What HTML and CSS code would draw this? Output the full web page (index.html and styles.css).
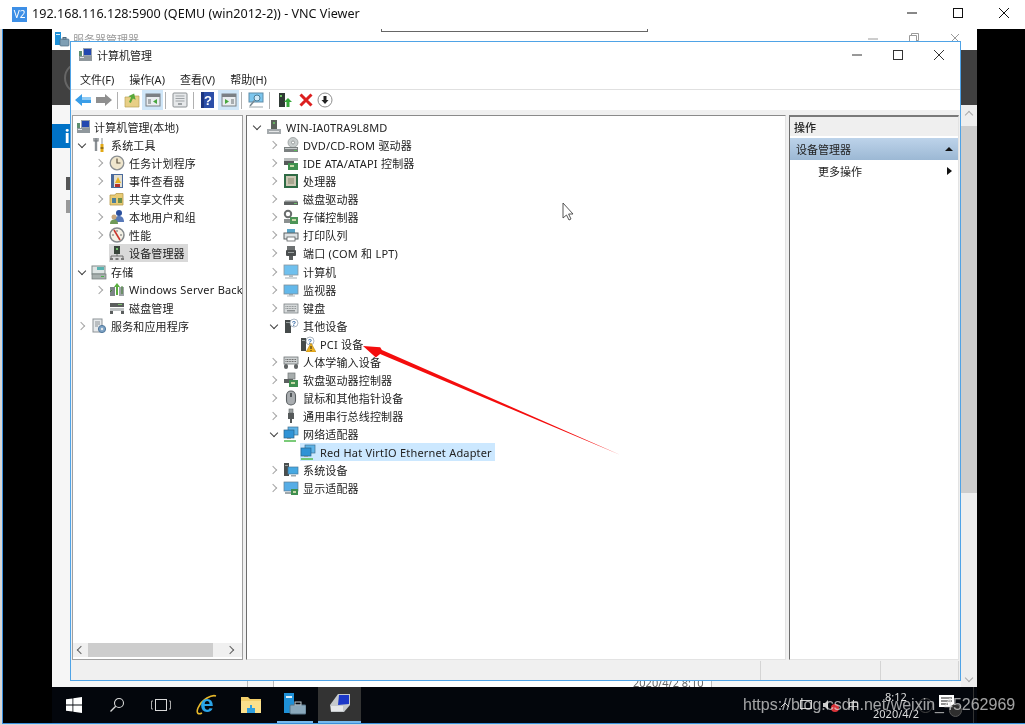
FILE: index.html
```html
<!DOCTYPE html>
<html>
<head>
    <title>192.168.116.128:5900 (QEMU (win2012-2)) - VNC Viewer</title>
    <link rel="stylesheet" href="styles.css">
</head>
<body>

<svg class="defs" width="0" height="0">
    <defs>
        <symbol id="i-cm" viewBox="0 0 16 16"><rect x="5" y="1" width="9" height="8" fill="#9aa3ad"/><rect x="6" y="2" width="7" height="6" fill="#2348b0"/><rect x="1" y="9" width="13" height="5" fill="#8f979c"/><rect x="2" y="10" width="4" height="1" fill="#e4e8ea"/><rect x="1" y="4" width="3" height="5" fill="#5f8f70"/></symbol>
        <symbol id="i-tools" viewBox="0 0 16 16"><path d="M5 1v13" stroke="#8a8f94" stroke-width="2.4"/><path d="M3 1v3h4V1" fill="none" stroke="#6f7478" stroke-width="1.2"/><path d="M11 1v6" stroke="#b5b9bc" stroke-width="1.6"/><path d="M11 7v8" stroke="#e2a915" stroke-width="3"/><path d="M9.5 11h3" stroke="#4a3a10"/></symbol>
        <symbol id="i-clock" viewBox="0 0 16 16"><circle cx="8" cy="8" r="6.8" fill="#efe6cd" stroke="#8b8f92" stroke-width="1.3"/><path d="M8 3.5V8h3.5" fill="none" stroke="#5c5240" stroke-width="1.2"/></symbol>
        <symbol id="i-event" viewBox="0 0 16 16"><rect x="2" y="1" width="12" height="14" fill="#4a6a9c"/><rect x="5" y="2" width="8" height="12" fill="#e3dfcf"/><path d="M9 4l3 6H6z" fill="#e8b320"/><rect x="6" y="11" width="5" height="3" fill="#b6332d"/></symbol>
        <symbol id="i-share" viewBox="0 0 16 16"><path d="M1 4h5l1-1.500h7V14H1z" fill="#e9cb74" stroke="#b59a4c" stroke-width=".8"/><rect x="3" y="7" width="4" height="5" fill="#4d7f9a"/><rect x="9" y="7" width="4" height="5" fill="#6d8f4c"/></symbol>
        <symbol id="i-users" viewBox="0 0 16 16"><circle cx="10" cy="4" r="3" fill="#2a4f9e"/><path d="M5 13c0-4 2-6 5-6s5 2 5 6z" fill="#5778b8"/><circle cx="5" cy="8" r="2.500" fill="#c9a77c"/><path d="M1 15c0-3 1.500-4.500 4-4.500s4 1.500 4 4.500z" fill="#6f9a58"/></symbol>
        <symbol id="i-perf" viewBox="0 0 16 16"><circle cx="8" cy="8" r="7" fill="#f4f1e6" stroke="#85898c" stroke-width="1.500"/><path d="M5 3l6 10" stroke="#c8362e" stroke-width="1.600"/><path d="M3 8h2M11 8h2M8 3v2" stroke="#6b6b6b"/></symbol>
        <symbol id="i-dev" viewBox="0 0 16 16"><rect x="5" y="1" width="6" height="8" fill="#3a463c"/><rect x="7" y="3" width="2" height="2" fill="#6fbf6a"/><path d="M8 9v2M2 13v-2h12v2" fill="none" stroke="#6d6d6d"/><rect x="1" y="13" width="3" height="2" fill="#787878"/><rect x="6.500" y="13" width="3" height="2" fill="#787878"/><rect x="12" y="13" width="3" height="2" fill="#787878"/></symbol>
        <symbol id="i-root" viewBox="0 0 16 16"><rect x="5" y="1" width="6" height="9" fill="#5b635b"/><rect x="7" y="3" width="2" height="2" fill="#66b060"/><rect x="1" y="10" width="14" height="5" fill="#a5aaad"/><rect x="3" y="12" width="10" height="1" fill="#e4e6e7"/></symbol>
        <symbol id="i-store" viewBox="0 0 16 16"><rect x="1" y="2" width="13" height="8" fill="#dfe5e4" stroke="#7f8a88"/><rect x="6" y="3" width="7" height="3" fill="#58b3b0"/><rect x="1" y="10" width="14" height="5" fill="#a8b0ae" stroke="#6f7876" stroke-width=".7"/><rect x="10" y="12" width="3" height="1" fill="#49b04a"/></symbol>
        <symbol id="i-wsb" viewBox="0 0 16 16"><rect x="1" y="5" width="5" height="9" fill="#7d8488"/><rect x="10" y="5" width="5" height="9" fill="#9da3a6"/><path d="M8 1l3 4H9v8H7V5H5z" fill="#58ad3d"/><path d="M3 8l-2 2M13 4v8" stroke="#3c7d2a"/></symbol>
        <symbol id="i-disk" viewBox="0 0 16 16"><rect x="1" y="3" width="14" height="4" fill="#5b5e5e"/><rect x="9" y="4" width="4" height="1" fill="#7dbf6e"/><rect x="1" y="8" width="14" height="3" fill="#bfc3c4"/><rect x="1" y="11" width="3" height="3" fill="#5b5e5e"/><rect x="12" y="11" width="3" height="3" fill="#5b5e5e"/></symbol>
        <symbol id="i-svc" viewBox="0 0 16 16"><rect x="2" y="1" width="9" height="13" fill="#e7eaec" stroke="#8c9296"/><path d="M4 4h5M4 6h5M4 8h3" stroke="#8c9296"/><circle cx="11" cy="11" r="3.600" fill="#7da2c4" stroke="#51789c"/><circle cx="11" cy="11" r="1.200" fill="#e7eaec"/></symbol>
        <symbol id="i-dvd" viewBox="0 0 16 16"><circle cx="10" cy="5.500" r="5" fill="#c8cdcd" stroke="#8d9292" stroke-width=".7"/><circle cx="10" cy="5.500" r="1.500" fill="#fff" stroke="#7c8282" stroke-width=".7"/><path d="M1 10h14v5H1z" fill="#7b8080"/><rect x="2" y="11" width="12" height="1" fill="#c9cdcd"/><rect x="11" y="13" width="3" height="1" fill="#59bd58"/></symbol>
        <symbol id="i-ide" viewBox="0 0 16 16"><rect x="1" y="3" width="14" height="3" fill="#b9bdbd"/><rect x="1" y="6" width="10" height="4" fill="#565a5a"/><rect x="5" y="8" width="10" height="7" fill="#3f8f4f"/><rect x="7" y="10" width="4" height="2" fill="#c6d9a6"/></symbol>
        <symbol id="i-cpu" viewBox="0 0 16 16"><rect x="1" y="1" width="14" height="14" fill="#2f6b45"/><rect x="3" y="3" width="10" height="10" fill="#cbc8b4"/><rect x="5" y="5" width="6" height="6" fill="#a9a791"/></symbol>
        <symbol id="i-hdd" viewBox="0 0 16 16"><path d="M3 9h10l2 2v3H1v-3z" fill="#5e6262"/><rect x="2" y="9" width="12" height="1.500" fill="#c4c8c8"/><rect x="11" y="12" width="3" height="1" fill="#6dc06a"/></symbol>
        <symbol id="i-scsi" viewBox="0 0 16 16"><circle cx="5" cy="5" r="3.200" fill="none" stroke="#6a6e6e" stroke-width="2"/><rect x="1" y="10" width="9" height="4" fill="#8b9090"/><rect x="7" y="8" width="8" height="7" fill="#4c9457"/><rect x="9" y="10" width="4" height="2" fill="#c8d8a8"/></symbol>
        <symbol id="i-print" viewBox="0 0 16 16"><rect x="4" y="2" width="8" height="4" fill="#58a5c8"/><rect x="1" y="6" width="14" height="6" fill="#dfe3e5" stroke="#5a6062"/><rect x="4" y="10" width="8" height="4" fill="#fff" stroke="#5a6062" stroke-width=".8"/></symbol>
        <symbol id="i-port" viewBox="0 0 16 16"><rect x="4" y="1" width="8" height="4" fill="#6d7172"/><rect x="3" y="5" width="10" height="6" rx="1" fill="#4a4e4f"/><rect x="5" y="7" width="6" height="1" fill="#9aa0a0"/><rect x="6" y="11" width="4" height="4" fill="#5a5e5f"/></symbol>
        <symbol id="i-pc" viewBox="0 0 16 16"><rect x="1" y="1" width="14" height="10" fill="#6fc0ee" stroke="#8a979e" stroke-width=".8"/><rect x="6" y="11" width="4" height="2" fill="#b4bcc0"/><rect x="2" y="13" width="12" height="2" fill="#cfd5d8"/></symbol>
        <symbol id="i-mon" viewBox="0 0 16 16"><rect x="1" y="3" width="14" height="9" fill="#63b8ea" stroke="#7f8f98" stroke-width=".8"/><rect x="6" y="12" width="4" height="1.500" fill="#9aa5aa"/><rect x="4" y="13.500" width="8" height="1" fill="#b4bcc0"/></symbol>
        <symbol id="i-kb" viewBox="0 0 16 16"><rect x="1" y="4" width="14" height="9" fill="#d6d9da" stroke="#7c8284" stroke-width=".8"/><path d="M2.500 6.500h11M2.500 8.500h11" stroke="#8c9193" stroke-dasharray="1 .6"/><rect x="4" y="10" width="8" height="1.500" fill="#8c9193"/></symbol>
        <symbol id="i-other" viewBox="0 0 16 16"><rect x="2" y="2" width="6" height="13" fill="#454a4a"/><rect x="3" y="4" width="4" height="1" fill="#9ca2a2"/><circle cx="11" cy="5" r="4" fill="#fff" stroke="#8b9aa8" stroke-width=".7"/><text class="q" x="11" y="7.500">?</text></symbol>
        <symbol id="i-pci" viewBox="0 0 16 16"><rect x="1" y="2" width="5" height="13" fill="#454a4a"/><rect x="2" y="4" width="3" height="1" fill="#9ca2a2"/><circle cx="10" cy="5" r="4" fill="#fff" stroke="#8b9aa8" stroke-width=".7"/><text class="q" x="10" y="7.500">?</text><path d="M11 7l5 9H6z" fill="#efb21c" stroke="#a87a10" stroke-width=".5"/><path d="M11 10v3M11 14v1" stroke="#222"/></symbol>
        <symbol id="i-hid" viewBox="0 0 16 16"><rect x="1" y="3" width="14" height="7" fill="#cfd3d4" stroke="#6f7577" stroke-width=".8"/><path d="M2.500 5.500h11M2.500 7.500h11" stroke="#666" stroke-dasharray="1 .6"/><rect x="1" y="10" width="4" height="5" rx="2" fill="#606465"/><rect x="11" y="10" width="4" height="5" rx="2" fill="#606465"/></symbol>
        <symbol id="i-fd" viewBox="0 0 16 16"><rect x="5" y="1" width="7" height="6" fill="#a7adad" stroke="#6f7575" stroke-width=".7"/><rect x="1" y="7" width="9" height="4" fill="#5c6060"/><rect x="6" y="8" width="9" height="7" fill="#3f8f4f"/><rect x="8" y="10" width="4" height="2" fill="#c6d9a6"/></symbol>
        <symbol id="i-mouse" viewBox="0 0 16 16"><rect x="3.500" y="1" width="9" height="14" rx="4.500" fill="#a9adb0" stroke="#5a5f62" stroke-width="1.100"/><rect x="7" y="3" width="2" height="4" fill="#52575a"/></symbol>
        <symbol id="i-usb" viewBox="0 0 16 16"><rect x="6" y="1" width="4" height="4" fill="#9ba0a1" stroke="#5f6465" stroke-width=".6"/><rect x="5" y="5" width="6" height="6" fill="#55595a"/><rect x="7" y="11" width="2" height="4" fill="#55595a"/></symbol>
        <symbol id="i-net" viewBox="0 0 16 16"><rect x="5" y="1" width="10" height="8" fill="#5fb4e8" stroke="#3f6f90" stroke-width=".7"/><rect x="1" y="4" width="10" height="8" fill="#2f93d6" stroke="#2b6489" stroke-width=".7"/><rect x="4" y="12" width="4" height="1" fill="#8c9599"/><path d="M1 15h12" stroke="#5bbf58" stroke-width="1.600"/></symbol>
        <symbol id="i-sys" viewBox="0 0 16 16"><rect x="1" y="1" width="5" height="13" fill="#4a4f4f"/><rect x="2" y="3" width="3" height="1" fill="#a0a5a5"/><rect x="5" y="5" width="10" height="7" fill="#46a8e2" stroke="#45799c" stroke-width=".7"/><rect x="8" y="13" width="5" height="1.500" fill="#9ca6ab"/></symbol>
        <symbol id="i-disp" viewBox="0 0 16 16"><rect x="1" y="2" width="14" height="9" fill="#56ade6" stroke="#5f7d90" stroke-width=".7"/><rect x="8" y="9" width="7" height="6" fill="#3f8f4f"/><rect x="10" y="11" width="3" height="2" fill="#c6d9a6"/><rect x="2" y="12" width="6" height="2" fill="#9fa8ac"/></symbol>
    </defs>
</svg>

<div class="page">
    <div class="vnc-title">
        <span class="vnc-logo">V2</span>
        <span class="vnc-text">192.168.116.128:5900 (QEMU (win2012-2)) - VNC Viewer</span>
        <div class="vnc-controls">
            <svg width="12" height="12" viewBox="0 0 12 12"><path d="M1 6h10" stroke="#111" stroke-width="1"/></svg>
            <svg width="12" height="12" viewBox="0 0 12 12"><rect x="1.500" y="1.500" width="9" height="9" fill="none" stroke="#111"/></svg>
            <svg width="12" height="12" viewBox="0 0 12 12"><path d="M1 1l10 10M11 1L1 11" stroke="#111"/></svg>
        </div>
    </div>

    <div class="vnc-body">
        <div class="screen">
            <div class="hint-bar"></div>

            <!-- server manager, behind everything -->
            <div class="sm">
                <div class="sm-title">
                    <svg class="sm-icon" width="16" height="16" viewBox="0 0 16 16"><rect x="1" y="0" width="6" height="13" fill="#1e90d8"/><rect x="2" y="2" width="4" height="1" fill="#dff1fb"/><rect x="6" y="7" width="9" height="7" rx="1" fill="#7f9fb4" stroke="#4d6b80" stroke-width=".7"/><rect x="9" y="5.500" width="3" height="1.500" fill="none" stroke="#4d6b80"/></svg>
                    <span class="sm-name">服务器管理器</span>
                    <div class="sm-controls">
                        <svg width="10" height="10" viewBox="0 0 10 10"><path d="M0 6h10" stroke="#9a9a9a"/></svg>
                        <svg width="10" height="10" viewBox="0 0 10 10"><path d="M2.500 2.500V.5h7v7h-2M.5 2.500h7v7h-7z" fill="none" stroke="#9a9a9a"/></svg>
                        <svg width="10" height="10" viewBox="0 0 10 10"><path d="M1 1l8 8M9 1L1 9" stroke="#9a9a9a"/></svg>
                    </div>
                </div>
                <div class="sm-band"><span class="sm-back"></span></div>
                <div class="sm-body">
                    <div class="sm-side">
                        <div class="sm-tile">i</div>
                        <div class="sm-mark"></div>
                        <div class="sm-mark sm-mark-light"></div>
                    </div>
                    <div class="sm-main">
                        <div class="sm-cell"></div>
                        <div class="sm-date">2020/4/2 8:10</div>
                    </div>
                    <div class="sm-scroll">
                        <span class="sm-arrow sm-arrow-up"></span>
                        <div class="sm-thumb"></div>
                        <span class="sm-arrow sm-arrow-down"></span>
                    </div>
                </div>
            </div>

            <!-- computer management window -->
            <div class="win">
                <div class="win-title">
                    <svg class="icon" width="16" height="16"><use href="#i-cm"/></svg>
                    <span class="win-name">计算机管理</span>
                    <div class="win-controls">
                        <svg width="12" height="12" viewBox="0 0 12 12"><path d="M1 6h10" stroke="#333"/></svg>
                        <svg width="12" height="12" viewBox="0 0 12 12"><rect x="1.500" y="1.500" width="9" height="9" fill="none" stroke="#333"/></svg>
                        <svg width="12" height="12" viewBox="0 0 12 12"><path d="M1 1l10 10M11 1L1 11" stroke="#333"/></svg>
                    </div>
                </div>
                <div class="menu">
                    <span>文件(F)</span>
                    <span>操作(A)</span>
                    <span>查看(V)</span>
                    <span>帮助(H)</span>
                </div>
                <div class="toolbar">
                    <svg class="tool" width="16" height="16" viewBox="0 0 16 16"><path d="M0 8l7-6v3h9v6H7v3z" fill="#3a9ee8"/><path d="M7 5h9v3H7z" fill="#8fcbf5"/></svg>
                    <svg class="tool" width="16" height="16" viewBox="0 0 16 16"><path d="M16 8L9 2v3H0v6h9v3z" fill="#8f8f8f"/></svg>
                    <span class="tool-sep"></span>
                    <svg class="tool" width="16" height="16" viewBox="0 0 16 16"><path d="M1 5h5l1-1h8v11H1z" fill="#e8cf86" stroke="#b9a058" stroke-width=".7"/><path d="M7 11V6H4l4-5 4 5H9v5z" fill="#59a83c" transform="rotate(25 8 6)"/></svg>
                    <span class="tool-on">
                        <svg width="16" height="16" viewBox="0 0 16 16"><rect x="1" y="2" width="14" height="12" fill="#e9edf0" stroke="#7b8085"/><rect x="1" y="2" width="14" height="3" fill="#7b8085"/><rect x="3" y="7" width="3" height="5" fill="#a8adb0"/><path d="M12 7v5L8 9.500z" fill="#47a63e"/></svg>
                    </span>
                    <span class="tool-sep"></span>
                    <svg class="tool" width="16" height="16" viewBox="0 0 16 16"><rect x="1" y="1" width="14" height="14" rx="1" fill="#e6e8ea" stroke="#8c9194"/><path d="M3.500 4h9M3.500 6.500h9M3.500 9h9" stroke="#9da2a5"/><rect x="6" y="11" width="4" height="2" fill="#9da2a5"/></svg>
                    <span class="tool-sep"></span>
                    <svg class="tool" width="16" height="16" viewBox="0 0 16 16"><rect x="1" y="0" width="13" height="16" fill="#2b4ea8"/><rect x="1" y="0" width="3" height="16" fill="#1c3580"/><text class="tool-q" x="8" y="13">?</text></svg>
                    <span class="tool-on">
                        <svg width="16" height="16" viewBox="0 0 16 16"><rect x="1" y="2" width="14" height="12" fill="#e9edf0" stroke="#7b8085"/><rect x="1" y="2" width="14" height="3" fill="#7b8085"/><rect x="10" y="7" width="3" height="5" fill="#a8adb0"/><path d="M4 7v5l4-2.500z" fill="#47a63e"/></svg>
                    </span>
                    <span class="tool-sep"></span>
                    <svg class="tool" width="16" height="16" viewBox="0 0 16 16"><rect x="1" y="1" width="14" height="9" fill="#7cc6ee" stroke="#5e8ca8"/><circle cx="9" cy="6" r="3" fill="#cfe9f8" stroke="#4a7c98"/><path d="M6.500 8.500L2 14" stroke="#7a8a92" stroke-width="1.500"/><path d="M1 15h14" stroke="#9aa5aa"/></svg>
                    <span class="tool-sep"></span>
                    <svg class="tool tool-dev" width="16" height="16" viewBox="0 0 16 16"><rect x="2" y="1" width="6" height="14" fill="#2f3a34"/><rect x="3" y="3" width="2" height="2" fill="#6cc262"/><path d="M11 6l4 4h-2.500v5h-3v-5H7z" fill="#36a83a"/></svg>
                    <svg class="tool tool-x" width="14" height="14" viewBox="0 0 14 14"><path d="M1.500 1.500l11 11M12.500 1.500l-11 11" stroke="#dc1f1f" stroke-width="3"/></svg>
                    <svg class="tool" width="16" height="16" viewBox="0 0 16 16"><circle cx="8" cy="8" r="7" fill="#fff" stroke="#8f8f8f"/><path d="M8 12L4.500 8H6.500V4h3v4h2z" fill="#222"/></svg>
                </div>

                <div class="panes">
                    <div class="pane pane-left">
                        <div class="tree">
                            <div class="row root"><svg class="icon" width="16" height="16"><use href="#i-cm"/></svg><span>计算机管理(本地)</span></div>
                            <div class="row"><i class="chev open"></i><svg class="icon" width="16" height="16"><use href="#i-tools"/></svg><span>系统工具</span></div>
                            <div class="row in2"><i class="chev"></i><svg class="icon" width="16" height="16"><use href="#i-clock"/></svg><span>任务计划程序</span></div>
                            <div class="row in2"><i class="chev"></i><svg class="icon" width="16" height="16"><use href="#i-event"/></svg><span>事件查看器</span></div>
                            <div class="row in2"><i class="chev"></i><svg class="icon" width="16" height="16"><use href="#i-share"/></svg><span>共享文件夹</span></div>
                            <div class="row in2"><i class="chev"></i><svg class="icon" width="16" height="16"><use href="#i-users"/></svg><span>本地用户和组</span></div>
                            <div class="row in2"><i class="chev"></i><svg class="icon" width="16" height="16"><use href="#i-perf"/></svg><span>性能</span></div>
                            <div class="row in2"><i class="chev none"></i><div class="sel sel-gray"><svg class="icon" width="16" height="16"><use href="#i-dev"/></svg><span>设备管理器</span></div></div>
                            <div class="row"><i class="chev open"></i><svg class="icon" width="16" height="16"><use href="#i-store"/></svg><span>存储</span></div>
                            <div class="row in2"><i class="chev"></i><svg class="icon" width="16" height="16"><use href="#i-wsb"/></svg><span>Windows Server Backup</span></div>
                            <div class="row in2"><i class="chev none"></i><svg class="icon" width="16" height="16"><use href="#i-disk"/></svg><span>磁盘管理</span></div>
                            <div class="row"><i class="chev"></i><svg class="icon" width="16" height="16"><use href="#i-svc"/></svg><span>服务和应用程序</span></div>
                        </div>
                        <div class="hbar">
                            <i class="hbar-arrow hbar-left"></i>
                            <div class="hbar-thumb"></div>
                            <i class="hbar-arrow hbar-right"></i>
                        </div>
                    </div>

                    <div class="pane pane-mid">
                        <div class="row top"><i class="chev open"></i><svg class="icon" width="16" height="16"><use href="#i-root"/></svg><span>WIN-IA0TRA9L8MD</span></div>
                        <div class="row kid"><i class="chev"></i><svg class="icon" width="16" height="16"><use href="#i-dvd"/></svg><span>DVD/CD-ROM 驱动器</span></div>
                        <div class="row kid"><i class="chev"></i><svg class="icon" width="16" height="16"><use href="#i-ide"/></svg><span>IDE ATA/ATAPI 控制器</span></div>
                        <div class="row kid"><i class="chev"></i><svg class="icon" width="16" height="16"><use href="#i-cpu"/></svg><span>处理器</span></div>
                        <div class="row kid"><i class="chev"></i><svg class="icon" width="16" height="16"><use href="#i-hdd"/></svg><span>磁盘驱动器</span></div>
                        <div class="row kid"><i class="chev"></i><svg class="icon" width="16" height="16"><use href="#i-scsi"/></svg><span>存储控制器</span></div>
                        <div class="row kid"><i class="chev"></i><svg class="icon" width="16" height="16"><use href="#i-print"/></svg><span>打印队列</span></div>
                        <div class="row kid"><i class="chev"></i><svg class="icon" width="16" height="16"><use href="#i-port"/></svg><span>端口 (COM 和 LPT)</span></div>
                        <div class="row kid"><i class="chev"></i><svg class="icon" width="16" height="16"><use href="#i-pc"/></svg><span>计算机</span></div>
                        <div class="row kid"><i class="chev"></i><svg class="icon" width="16" height="16"><use href="#i-mon"/></svg><span>监视器</span></div>
                        <div class="row kid"><i class="chev"></i><svg class="icon" width="16" height="16"><use href="#i-kb"/></svg><span>键盘</span></div>
                        <div class="row kid"><i class="chev open"></i><svg class="icon" width="16" height="16"><use href="#i-other"/></svg><span>其他设备</span></div>
                        <div class="row grandkid"><i class="chev none"></i><svg class="icon" width="16" height="16"><use href="#i-pci"/></svg><span>PCI 设备</span></div>
                        <div class="row kid"><i class="chev"></i><svg class="icon" width="16" height="16"><use href="#i-hid"/></svg><span>人体学输入设备</span></div>
                        <div class="row kid"><i class="chev"></i><svg class="icon" width="16" height="16"><use href="#i-fd"/></svg><span>软盘驱动器控制器</span></div>
                        <div class="row kid"><i class="chev"></i><svg class="icon" width="16" height="16"><use href="#i-mouse"/></svg><span>鼠标和其他指针设备</span></div>
                        <div class="row kid"><i class="chev"></i><svg class="icon" width="16" height="16"><use href="#i-usb"/></svg><span>通用串行总线控制器</span></div>
                        <div class="row kid"><i class="chev open"></i><svg class="icon" width="16" height="16"><use href="#i-net"/></svg><span>网络适配器</span></div>
                        <div class="row grandkid"><i class="chev none"></i><div class="sel sel-blue"><svg class="icon" width="16" height="16"><use href="#i-net"/></svg><span>Red Hat VirtIO Ethernet Adapter</span></div></div>
                        <div class="row kid"><i class="chev"></i><svg class="icon" width="16" height="16"><use href="#i-sys"/></svg><span>系统设备</span></div>
                        <div class="row kid"><i class="chev"></i><svg class="icon" width="16" height="16"><use href="#i-disp"/></svg><span>显示适配器</span></div>
                    </div>

                    <div class="pane pane-right">
                        <div class="act-head">操作</div>
                        <div class="act-band"><span>设备管理器</span><i class="tri-up"></i></div>
                        <div class="act-item"><span>更多操作</span><i class="tri-right"></i></div>
                    </div>
                </div>

                <div class="status">
                    <div class="status-cell status-main"></div>
                    <div class="status-cell status-mid"></div>
                    <div class="status-cell status-end"></div>
                </div>
            </div>

            <!-- taskbar -->
            <div class="taskbar">
                <div class="task-btn">
                    <svg width="16" height="16" viewBox="0 0 16 16"><path d="M0 2.300l6.500-.9v6.200H0zM7.300 1.300L16 0v7.600H7.300zM0 8.400h6.500v6.200L0 13.700zM7.300 8.400H16V16l-8.700-1.300z" fill="#fff"/></svg>
                </div>
                <div class="task-btn">
                    <svg width="16" height="16" viewBox="0 0 16 16"><circle cx="10" cy="6" r="4.500" fill="none" stroke="#d8d8d8" stroke-width="1.100"/><path d="M6.700 9.300L1.500 14.500" stroke="#d8d8d8" stroke-width="1.300"/></svg>
                </div>
                <div class="task-btn">
                    <svg width="20" height="14" viewBox="0 0 20 14"><rect x="4.500" y="1.500" width="11" height="11" fill="none" stroke="#d8d8d8"/><path d="M2 3H.5v8H2M18 3h1.500v8H18" fill="none" stroke="#a8a8a8"/></svg>
                </div>
                <div class="task-btn task-ie">
                    <svg width="22" height="22" viewBox="0 0 22 22"><path d="M20 2C16 .5 6 5 2 14c-2 5 0 7 4 5" fill="none" stroke="#e8b82a" stroke-width="1.600"/><text class="ie-e" x="11" y="18">e</text></svg>
                </div>
                <div class="task-btn">
                    <svg width="20" height="18" viewBox="0 0 20 18"><path d="M0 1h7l2 2h11v14H0z" fill="#f3cf6b"/><rect x="0" y="5" width="20" height="12" fill="#fbe08c"/><path d="M6 17v-5h3v-3h2v3h3v5z" fill="#2f9fe0"/></svg>
                </div>
                <div class="task-btn task-open task-sm">
                    <svg width="22" height="22" viewBox="0 0 22 22"><rect x="0" y="0" width="10" height="20" fill="#1e90d8"/><rect x="2" y="3" width="6" height="2" fill="#dff1fb"/><rect x="6" y="12" width="16" height="9" rx="1" fill="#8aa8bc" stroke="#567488"/><rect x="11" y="9" width="6" height="3" fill="none" stroke="#c0ccd4"/></svg>
                </div>
                <div class="task-btn task-open task-active">
                    <svg width="22" height="22" viewBox="0 0 22 22"><path d="M9 1h12v11l-6 7H2l-1-7z" fill="#c5c9cc"/><path d="M10 2h10v9l-11 1z" fill="#1c38c8"/><rect x="2" y="13" width="12" height="5" fill="#e6e8e9"/></svg>
                </div>

                <div class="tray">
                    <svg width="10" height="10" viewBox="0 0 10 10"><path d="M1 7l4-4 4 4" fill="none" stroke="#ccc"/></svg>
                    <svg width="14" height="12" viewBox="0 0 14 12"><rect x="1.500" y="1.500" width="11" height="8" fill="none" stroke="#ccc"/></svg>
                    <svg width="12" height="12" viewBox="0 0 12 12"><path d="M1 4h2l3-3v10L3 8H1z" fill="#ccc"/></svg>
                    <span class="tray-lang">中</span>
                    <div class="clock"><span>8:12</span><span>2020/4/2</span></div>
                    <span class="tray-ring"></span>
                    <svg class="tray-note" width="15" height="12" viewBox="0 0 15 12"><rect width="15" height="12" fill="#fff"/><path d="M2 3h11M2 6h11M2 9h7" stroke="#222"/></svg>
                    <span class="tray-dot"></span>
                    <span class="tray-edge"></span>
                </div>
            </div>
        </div>
    </div>

    <!-- pointer, red marker and blog mark sit on top of the capture -->
    <svg class="overlay" width="1025" height="725" viewBox="0 0 1025 725">
        <path d="M563 203v15l3.500-3 2.500 5 2-1-2.400-5h4.400z" fill="#fff" stroke="#444" stroke-width=".9"/>
        <path d="M620.500 455L380.100 354 375.800 357.500 363 346 380.200 347.300 381.900 350z" fill="#f40d0d"/>
        <circle cx="835" cy="708" r="4" fill="#d8343a"/>
    </svg>
    <div class="csdn-mark">https://blog.csdn.net/weixin_45262969</div>
</div>

</body>
</html>
```

FILE: styles.css
```css
body {
    margin: 0;
    overflow: hidden;
    background: #000;
    font-family: "Noto Sans", "Noto Sans CJK SC", sans-serif;
    font-size: 11px;
    color: #222;
}

.defs {
    position: absolute;
}

.page {
    position: relative;
    width: 1025px;
    height: 725px;
    overflow: hidden;
    display: flex;
    flex-direction: column;
    background: #d8d8d8;
    filter: blur(0.3px);
}

.icon {
    flex: none;
}

.q {
    font-family: "Liberation Sans", sans-serif;
    font-size: 7px;
    font-weight: bold;
    fill: #3a6ea8;
    text-anchor: middle;
}

/* vnc viewer frame */
.vnc-title {
    height: 29px;
    flex: none;
    background: #fff;
    display: flex;
    align-items: center;
    padding-left: 12px;
}

.vnc-logo {
    width: 15px;
    height: 15px;
    background: #3d8fe6;
    color: #fff;
    font-size: 10px;
    line-height: 15px;
    text-align: center;
    margin-top: -1px;
}

.vnc-text {
    margin-left: 5px;
    font-size: 12.6px;
    color: #111;
    margin-top: -3px;
}

.vnc-controls {
    margin-left: auto;
    display: flex;
    gap: 34px;
    padding-right: 15px;
    margin-top: -3px;
}

.vnc-body {
    flex: 1;
    background: #000;
    border-left: 1px solid #3a8fdc;
    border-bottom: 1px solid #3a8fdc;
    margin-left: 2px;
    padding-left: 49px;
    display: flex;
    margin-bottom: 1px;
}

.screen {
    position: relative;
    width: 925px;
    display: flex;
    flex-direction: column;
}

.hint-bar {
    position: absolute;
    left: 329px;
    top: 0;
    width: 267px;
    height: 3px;
    border: 1px solid #666;
    border-top: none;
    box-sizing: border-box;
}

/* server manager behind the window */
.sm {
    height: 658px;
    display: flex;
    flex-direction: column;
    background: #f6f6f6;
}

.sm-title {
    height: 21px;
    background: #fff;
    display: flex;
    align-items: flex-start;
    padding: 3px 0 0 2px;
    box-sizing: border-box;
}

.sm-icon {
    flex: none;
}

.sm-name {
    margin-left: 3px;
    color: #999;
    line-height: 16px;
}

.sm-controls {
    margin-left: auto;
    display: flex;
    gap: 31px;
    padding-right: 17px;
    padding-top: 1px;
}

.sm-band {
    height: 55px;
    background: #404040;
    display: flex;
    align-items: center;
    padding-left: 12px;
}

.sm-back {
    width: 32px;
    height: 32px;
    border: 2px solid #666;
    border-radius: 50%;
    box-sizing: border-box;
}

.sm-body {
    flex: 1;
    display: flex;
}

.sm-side {
    width: 18px;
    padding-top: 19px;
    display: flex;
    flex-direction: column;
    align-items: flex-end;
}

.sm-tile {
    width: 18px;
    height: 24px;
    background: #0072c6;
    color: #fff;
    font-size: 18px;
    line-height: 24px;
    text-align: right;
    font-weight: bold;
    margin-bottom: 29px;
}

.sm-mark {
    width: 4px;
    height: 13px;
    background: #555;
    margin-bottom: 10px;
}

.sm-mark-light {
    background: #999;
}

.sm-main {
    flex: 1;
    display: flex;
    align-items: flex-end;
    padding-left: 177px;
}

.sm-cell {
    width: 26px;
    height: 6px;
    border-left: 1px solid #bbb;
    box-sizing: border-box;
}

.sm-date {
    width: 439px;
    height: 6px;
    overflow: hidden;
    background: #fff;
    border-left: 1px solid #bbb;
    border-right: 1px solid #bbb;
    color: #666;
    line-height: 4px;
    padding-left: 359px;
    box-sizing: border-box;
    white-space: nowrap;
}

.sm-scroll {
    width: 16px;
    background: #eee;
    display: flex;
    flex-direction: column;
    align-items: center;
    padding: 6px 0;
    box-sizing: border-box;
}

.sm-thumb {
    width: 16px;
    height: 367px;
    margin-top: 8px;
    background: #cdcdcd;
}

.sm-arrow {
    width: 5px;
    height: 5px;
    border-left: 1px solid #aaa;
    border-top: 1px solid #aaa;
    flex: none;
}

.sm-arrow-up {
    transform: rotate(45deg);
    margin-top: 1px;
}

.sm-arrow-down {
    transform: rotate(225deg);
    margin-top: auto;
}

/* computer management window */
.win {
    position: absolute;
    left: 18px;
    top: 12px;
    width: 891px;
    height: 640px;
    box-sizing: border-box;
    border: 1px solid #4fa3e6;
    background: #f0f0f0;
    display: flex;
    flex-direction: column;
}

.win-title {
    height: 26px;
    flex: none;
    background: #fff;
    display: flex;
    align-items: center;
    padding-left: 7px;
}

.win-name {
    margin-left: 3px;
    font-size: 11px;
    color: #222;
}

.win-controls {
    margin-left: auto;
    display: flex;
    gap: 29px;
    padding-right: 15px;
}

.menu {
    height: 21px;
    flex: none;
    background: #fff;
    border-bottom: 1px solid #e0e0e0;
    display: flex;
    align-items: center;
    gap: 15px;
    padding-left: 9px;
    font-size: 11px;
}

.toolbar {
    height: 20px;
    flex: none;
    background: #fff;
    display: flex;
    align-items: center;
    padding-left: 4px;
}

.tool {
    flex: none;
    margin-right: 5px;
}

.tool-sep {
    width: 1px;
    height: 17px;
    background: #b0b0b0;
    margin: 0 6px 0 0;
}

.tool-on {
    width: 21px;
    height: 20px;
    background: #cfe6f8;
    display: flex;
    align-items: center;
    justify-content: center;
    margin: 0 2px 0 -3px;
}

.tool-q {
    font-family: "Liberation Sans", sans-serif;
    font-size: 13px;
    font-weight: bold;
    fill: #fff;
    text-anchor: middle;
}

.tool-dev {
    margin-left: 1px;
}

.tool-x {
    margin-left: 1px;
    margin-right: 4px;
}

.panes {
    flex: 1;
    min-height: 0;
    margin-top: 5px;
    padding: 0 1px;
    display: flex;
    gap: 3px;
}

.pane {
    background: #fff;
    box-sizing: border-box;
    overflow: hidden;
}

.pane-left {
    width: 171px;
    border: 1px solid #a0a0a0;
    display: flex;
    flex-direction: column;
}

.pane-mid {
    width: 540px;
    border: 1px solid #e3e3e3;
    border-left: 1px solid #6d6d6d;
    border-top: 1px solid #8a8a8a;
    padding-top: 2px;
}

.pane-right {
    flex: 1;
    border: 1px solid #e3e3e3;
    border-left: 1px solid #6d6d6d;
    border-top: 2px solid #7a7a7a;
}

.tree {
    flex: 1;
    padding-top: 2px;
}

.row {
    height: 18.07px;
    display: flex;
    align-items: center;
    white-space: nowrap;
    letter-spacing: 0.15px;
    word-spacing: 0.3px;
}

.row .icon {
    margin-right: 4px;
}

.root {
    padding-left: 3px;
}

.root .icon {
    margin-right: 2px;
}

.in2 {
    padding-left: 18px;
}

.top {
    padding-left: 1px;
}

.kid {
    padding-left: 18px;
}

.grandkid {
    padding-left: 35px;
}

.sel {
    display: flex;
    align-items: center;
    height: 18px;
    padding-right: 3px;
}

.sel-gray {
    background: #d9d9d9;
}

.sel-blue {
    background: #cce8ff;
}

.chev {
    width: 18px;
    height: 18px;
    flex: none;
    position: relative;
}

.chev::before {
    content: "";
    position: absolute;
    left: 5px;
    top: 6px;
    width: 5px;
    height: 5px;
    border-top: 1.3px solid #a6a6a6;
    border-right: 1.3px solid #a6a6a6;
    transform: rotate(45deg);
}

.chev.open::before {
    left: 6px;
    top: 5px;
    border-top: none;
    border-bottom: 1.3px solid #404040;
    border-right-color: #404040;
}

.chev.none::before {
    display: none;
}

.hbar {
    height: 14px;
    flex: none;
    margin-bottom: 2px;
    background: #f0f0f0;
    display: flex;
    align-items: center;
    padding: 0 5px;
}

.hbar-thumb {
    width: 125px;
    height: 14px;
    margin: 0 14px 0 4px;
    background: #cdcdcd;
}

.hbar-arrow {
    width: 5px;
    height: 5px;
    flex: none;
    border-top: 1.5px solid #606060;
    border-left: 1.5px solid #606060;
}

.hbar-left {
    transform: rotate(-45deg);
}

.hbar-right {
    transform: rotate(135deg);
}

.act-head {
    height: 19px;
    line-height: 21px;
    background: #efefef;
    padding-left: 4px;
    font-weight: 500;
}

.act-band {
    height: 22px;
    margin-top: 2px;
    background: linear-gradient(#bdd3ea, #9cb8d4);
    display: flex;
    align-items: center;
    justify-content: space-between;
    padding: 0 5px 0 6px;
}

.tri-up {
    width: 0;
    height: 0;
    border-left: 4px solid transparent;
    border-right: 4px solid transparent;
    border-bottom: 4px solid #111;
}

.act-item {
    height: 22px;
    display: flex;
    align-items: center;
    justify-content: space-between;
    padding: 0 6px 0 28px;
}

.tri-right {
    width: 0;
    height: 0;
    border-top: 4px solid transparent;
    border-bottom: 4px solid transparent;
    border-left: 5px solid #111;
}

.status {
    height: 19px;
    flex: none;
    margin: 1px 1px 0;
    display: flex;
}

.status-cell {
    border-right: 1px solid #d4d4d4;
    box-sizing: border-box;
}

.status-main {
    flex: 1;
}

.status-mid {
    width: 120px;
}

.status-end {
    width: 78px;
}

/* taskbar */
.taskbar {
    flex: 1;
    background: #03060c;
    display: flex;
    align-items: center;
}

.task-btn {
    width: 43.5px;
    height: 100%;
    flex: none;
    box-sizing: border-box;
    display: flex;
    align-items: center;
    justify-content: center;
}

.task-ie {
    margin-left: 3px;
}

.task-open {
    border-bottom: 2px solid #76b9ed;
}

.task-sm {
    width: 36px;
    margin: 0 5px 0 4.5px;
}

.task-active {
    width: 43px;
    background: #333;
}

.ie-e {
    font-family: "Liberation Sans", sans-serif;
    font-size: 24px;
    font-weight: bold;
    fill: #2aa4e8;
    text-anchor: middle;
}

.tray {
    flex: 1;
    height: 100%;
    display: flex;
    align-items: center;
    color: #ddd;
    padding-left: 419px;
    gap: 9px;
    position: relative;
}

.tray-lang {
    font-size: 11px;
    margin-left: 5px;
}

.clock {
    display: flex;
    flex-direction: column;
    align-items: center;
    font-size: 11px;
    line-height: 17px;
    margin-left: 5px;
}

.tray-ring {
    width: 13px;
    height: 13px;
    border: 1px solid #444;
    border-radius: 50%;
    margin-left: -10px;
}

.tray-note {
    margin-left: -3px;
    margin-top: -8px;
}

.tray-dot {
    position: absolute;
    right: 15px;
    top: 17px;
    width: 13px;
    height: 13px;
    border-radius: 50%;
    background: #2e2e2e;
    border: 1px solid #555;
    box-sizing: border-box;
}

.tray-edge {
    position: absolute;
    right: 3px;
    top: 0;
    bottom: 0;
    width: 1px;
    background: #333;
}

/* on top of the capture */
.overlay {
    position: absolute;
    left: 0;
    top: 0;
    pointer-events: none;
}

.csdn-mark {
    position: absolute;
    left: 743px;
    top: 696px;
    font-family: "Liberation Sans", sans-serif;
    font-size: 16px;
    color: rgba(225, 225, 225, 0.72);
    white-space: nowrap;
}
```
